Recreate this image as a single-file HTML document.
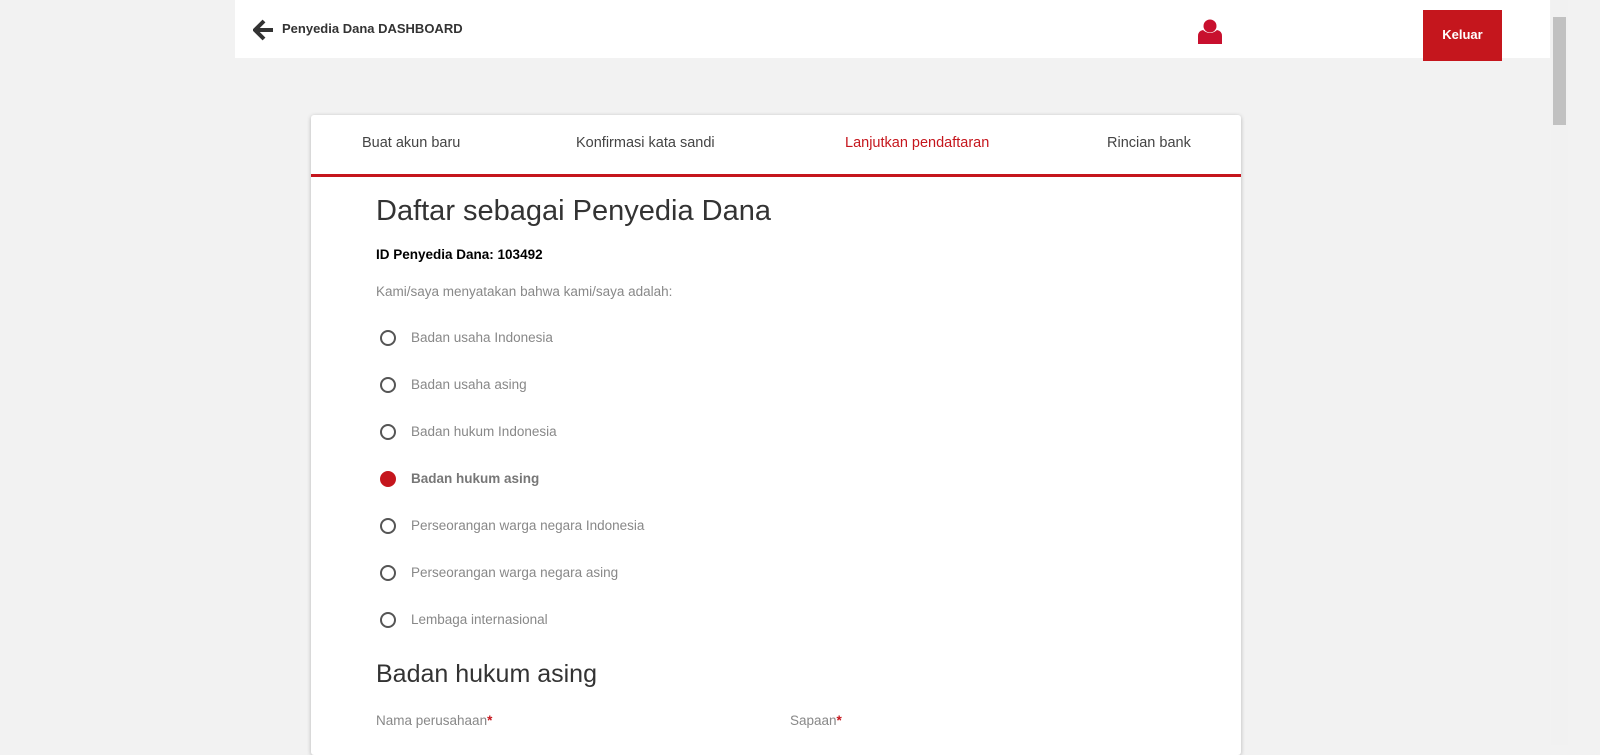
<!DOCTYPE html>
<html><head><style>
body{margin:0;width:1600px;height:745px;overflow:hidden;background:#f2f2f2;font-family:"Liberation Sans",sans-serif;position:relative}
.hdr{position:absolute;left:235px;top:0;width:1315px;height:58px;background:#fff}
.t{position:absolute;white-space:nowrap}
.sb{position:absolute;left:1551px;top:0;width:17px;height:745px;background:#f1f1f1}
.card{position:absolute;left:311px;top:115px;width:930px;height:640px;background:#fff;box-shadow:0 1px 4px rgba(0,0,0,.25);border-radius:3px}
.radio{position:absolute;left:380px;width:12px;height:12px;border:2px solid #555;border-radius:50%}
.lab{position:absolute;left:411px;font-size:13.5px;color:#888;white-space:nowrap}
</style></head><body>
<div class="hdr">
<svg style="position:absolute;left:18px;top:19px" width="22" height="22" viewBox="0 0 22 22"><path d="M11 2 L2 11 L11 20 M2 11 H20" stroke="#333" stroke-width="4" fill="none" stroke-linejoin="miter"/></svg>
<div class="t" style="left:47px;top:21px;font-size:13px;font-weight:bold;color:#333">Penyedia Dana DASHBOARD</div>
<svg style="position:absolute;left:963px;top:19px" width="24" height="25" viewBox="0 0 24 25"><circle cx="12" cy="7" r="6.5" fill="#c8102e"/><path d="M0 25 V17 Q0 12 5 11 Q12 17 19 11 Q24 12 24 17 V25Z" fill="#c8102e"/></svg>
<div style="position:absolute;left:1188px;top:10px;width:79px;height:51px;background:#c5161d;color:#fff;font-size:13px;font-weight:bold;text-align:center;line-height:49px">Keluar</div>
</div>
<div class="sb"><div style="position:absolute;left:2px;top:17px;width:13px;height:108px;background:#c1c1c1"></div></div>
<div class="card">
<div class="t" style="left:51px;top:20px;font-size:14.5px;color:#444">Buat akun baru</div>
<div class="t" style="left:265px;top:20px;font-size:14.5px;color:#444">Konfirmasi kata sandi</div>
<div class="t" style="left:534px;top:20px;font-size:14.5px;color:#c5161d">Lanjutkan pendaftaran</div>
<div class="t" style="left:796px;top:20px;font-size:14.5px;color:#444">Rincian bank</div>
<div style="position:absolute;left:0;top:59px;width:930px;height:3px;background:#c5161d"></div>
</div>
<div class="t" style="left:376px;top:195px;font-size:29px;color:#333">Daftar sebagai Penyedia Dana</div>
<div class="t" style="left:376px;top:247px;font-size:13.5px;font-weight:bold;color:#000">ID Penyedia Dana: 103492</div>
<div class="t" style="left:376px;top:284px;font-size:13.5px;color:#888">Kami/saya menyatakan bahwa kami/saya adalah:</div>
<div class="radio" style="top:330px"></div><div class="lab" style="top:330px">Badan usaha Indonesia</div>
<div class="radio" style="top:377px"></div><div class="lab" style="top:377px">Badan usaha asing</div>
<div class="radio" style="top:424px"></div><div class="lab" style="top:424px">Badan hukum Indonesia</div>
<div class="radio" style="top:471px;background:#c5161d;border-color:#c5161d"></div><div class="lab" style="top:471px;font-weight:bold;color:#777">Badan hukum asing</div>
<div class="radio" style="top:518px"></div><div class="lab" style="top:518px">Perseorangan warga negara Indonesia</div>
<div class="radio" style="top:565px"></div><div class="lab" style="top:565px">Perseorangan warga negara asing</div>
<div class="radio" style="top:612px"></div><div class="lab" style="top:612px">Lembaga internasional</div>
<div class="t" style="left:376px;top:660px;font-size:25px;color:#333">Badan hukum asing</div>
<div class="t" style="left:376px;top:713px;font-size:13.5px;color:#888">Nama perusahaan<span style="color:#c5161d;font-weight:bold">*</span></div>
<div class="t" style="left:790px;top:713px;font-size:13.5px;color:#888">Sapaan<span style="color:#c5161d;font-weight:bold">*</span></div>
</body></html>
